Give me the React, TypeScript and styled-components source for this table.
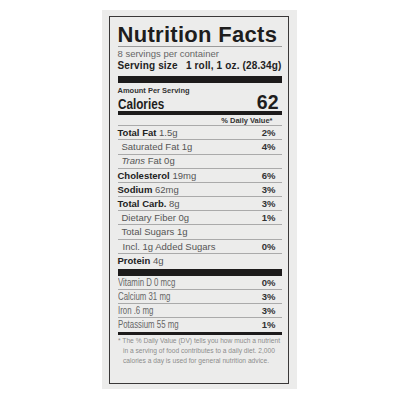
import styled, { createGlobalStyle } from 'styled-components';

const GlobalStyle = createGlobalStyle`
  html, body {
    margin: 0;
    padding: 0;
    background: #ffffff;
  }
  body {
    font-family: "Liberation Sans", Arial, sans-serif;
    color: #222;
  }
`;

const Page = styled.div`
  width: 400px;
  height: 400px;
  box-sizing: border-box;
  padding: 10px 0 0 102px;
`;

const Panel = styled.div`
  width: 195px;
  height: 379px;
  box-sizing: border-box;
  padding: 6px 8px 5px 7px;
  background: #ececeb;
`;

const Label = styled.div`
  height: 100%;
  box-sizing: border-box;
  border: 1.5px solid #3a3838;
  padding: 7px 6.5px 0 7.5px;
  display: flex;
  flex-direction: column;
`;

const Title = styled.h1`
  margin: 0;
  font-size: 22px;
  line-height: 22px;
  font-weight: 700;
  letter-spacing: 0.3px;
  color: #1e1d1d;
  border-bottom: 0.5px solid #9a9a9a;
`;

const Servings = styled.div`
  margin-top: 1px;
  font-size: 9.5px;
  line-height: 12px;
  color: #666;
`;

const ServingSize = styled.div`
  display: flex;
  justify-content: space-between;
  font-size: 10px;
  line-height: 12px;
  font-weight: 700;
  letter-spacing: 0.15px;
  color: #222;
`;

const Bar = styled.div<{ $h: number; $mt?: number }>`
  height: ${p => p.$h}px;
  margin-top: ${p => p.$mt ?? 0}px;
  background: #1d1b1b;
`;

const Amount = styled.div`
  margin-top: 3.3px;
  font-size: 7.5px;
  line-height: 9px;
  font-weight: 700;
  color: #333;
`;

const CaloriesRow = styled.div`
  display: flex;
  justify-content: space-between;
  align-items: baseline;
  height: 16.7px;
  line-height: 14px;
  font-weight: 700;
  color: #1e1d1d;
  padding-right: 3px;
`;

const CaloriesLabel = styled.span`
  display: inline-block;
  font-size: 15px;
  transform: scaleX(0.78);
  transform-origin: left center;
`;

const CaloriesValue = styled.span`
  font-size: 19.5px;
`;

const DvHeader = styled.div`
  height: 10.7px;
  box-sizing: border-box;
  border-bottom: 1px solid #aaa;
  text-align: right;
  padding: 1.5px 9px 0 0;
  font-size: 7.5px;
  line-height: 8px;
  font-weight: 700;
  color: #333;
`;

const Row = styled.div<{ $indent: number; $last?: boolean; $h: number }>`
  display: flex;
  justify-content: space-between;
  align-items: center;
  height: ${p => p.$h}px;
  box-sizing: border-box;
  border-bottom: ${p => (p.$last ? 'none' : '1px solid #aaa')};
  padding: 0 6px 0 ${p => p.$indent}px;
  font-size: 9.5px;
  line-height: 1;
`;

const Name = styled.span`
  font-weight: 700;
  color: #222;
`;

const Value = styled.span`
  color: #555;
`;

const Pct = styled.span`
  font-weight: 700;
  color: #333;
`;

const Vitamin = styled.span`
  display: inline-block;
  color: #666;
  font-size: 10.6px;
  transform: scaleX(0.74);
  transform-origin: left center;
  white-space: nowrap;
`;

const Footnote = styled.div`
  margin-top: 1.6px;
  padding-left: 5.5px;
  font-size: 7.4px;
  line-height: 10px;
  color: #8c8c8c;
  white-space: nowrap;
  transform: scaleX(0.9);
  transform-origin: left top;
`;

const Star = styled.span`
  margin-left: -5.5px;
`;

type Nutrient = {
  name?: string;
  plain?: string;
  italic?: string;
  value: string;
  pct?: string;
  indent: number;
};

const nutrients: Nutrient[] = [
  { name: 'Total Fat', value: '1.5g', pct: '2%', indent: 0 },
  { plain: 'Saturated Fat', value: '1g', pct: '4%', indent: 4 },
  { italic: 'Trans', plain: 'Fat', value: '0g', indent: 4 },
  { name: 'Cholesterol', value: '19mg', pct: '6%', indent: 0 },
  { name: 'Sodium', value: '62mg', pct: '3%', indent: 0 },
  { name: 'Total Carb.', value: '8g', pct: '3%', indent: 0 },
  { plain: 'Dietary Fiber', value: '0g', pct: '1%', indent: 4 },
  { plain: 'Total Sugars', value: '1g', indent: 4 },
  { plain: 'Incl. 1g Added Sugars', value: '', pct: '0%', indent: 5 },
  { name: 'Protein', value: '4g', indent: 0 },
];

const vitamins = [
  { text: 'Vitamin D 0 mcg', pct: '0%' },
  { text: 'Calcium 31 mg', pct: '3%' },
  { text: 'Iron .6 mg', pct: '3%' },
  { text: 'Potassium 55 mg', pct: '1%' },
];

export default function App() {
  return (
    <>
      <GlobalStyle />
      <Page>
        <Panel>
          <Label>
            <Title>Nutrition Facts</Title>
            <Servings>8 servings per container</Servings>
            <ServingSize>
              <span>Serving size</span>
              <span>1 roll, 1 oz. (28.34g)</span>
            </ServingSize>
            <Bar $h={7} $mt={3.5} />
            <Amount>Amount Per Serving</Amount>
            <CaloriesRow>
              <CaloriesLabel>Calories</CaloriesLabel>
              <CaloriesValue>62</CaloriesValue>
            </CaloriesRow>
            <Bar $h={4} />
            <DvHeader>% Daily Value*</DvHeader>
            {nutrients.map((n, i) => (
              <Row key={i} $indent={n.indent} $h={14.2} $last={i === nutrients.length - 1}>
                <span>
                  {n.name && <Name>{n.name} </Name>}
                  {n.italic && <Value><i>{n.italic}</i> </Value>}
                  {n.plain && <Value>{n.plain} </Value>}
                  <Value>{n.value}</Value>
                </span>
                {n.pct && <Pct>{n.pct}</Pct>}
              </Row>
            ))}
            <Bar $h={7.5} $mt={0.5} />
            {vitamins.map((v, i) => (
              <Row key={v.text} $indent={0} $h={13.9} $last={i === vitamins.length - 1}>
                <Vitamin>{v.text}</Vitamin>
                <Pct>{v.pct}</Pct>
              </Row>
            ))}
            <Bar $h={3} />
            <Footnote>
              <Star>* </Star>The % Daily Value (DV) tells you how much a nutrient
              <br />
              in a serving of food contributes to a daily diet. 2,000
              <br />
              calories a day is used for general nutrition advice.
            </Footnote>
          </Label>
        </Panel>
      </Page>
    </>
  );
}
